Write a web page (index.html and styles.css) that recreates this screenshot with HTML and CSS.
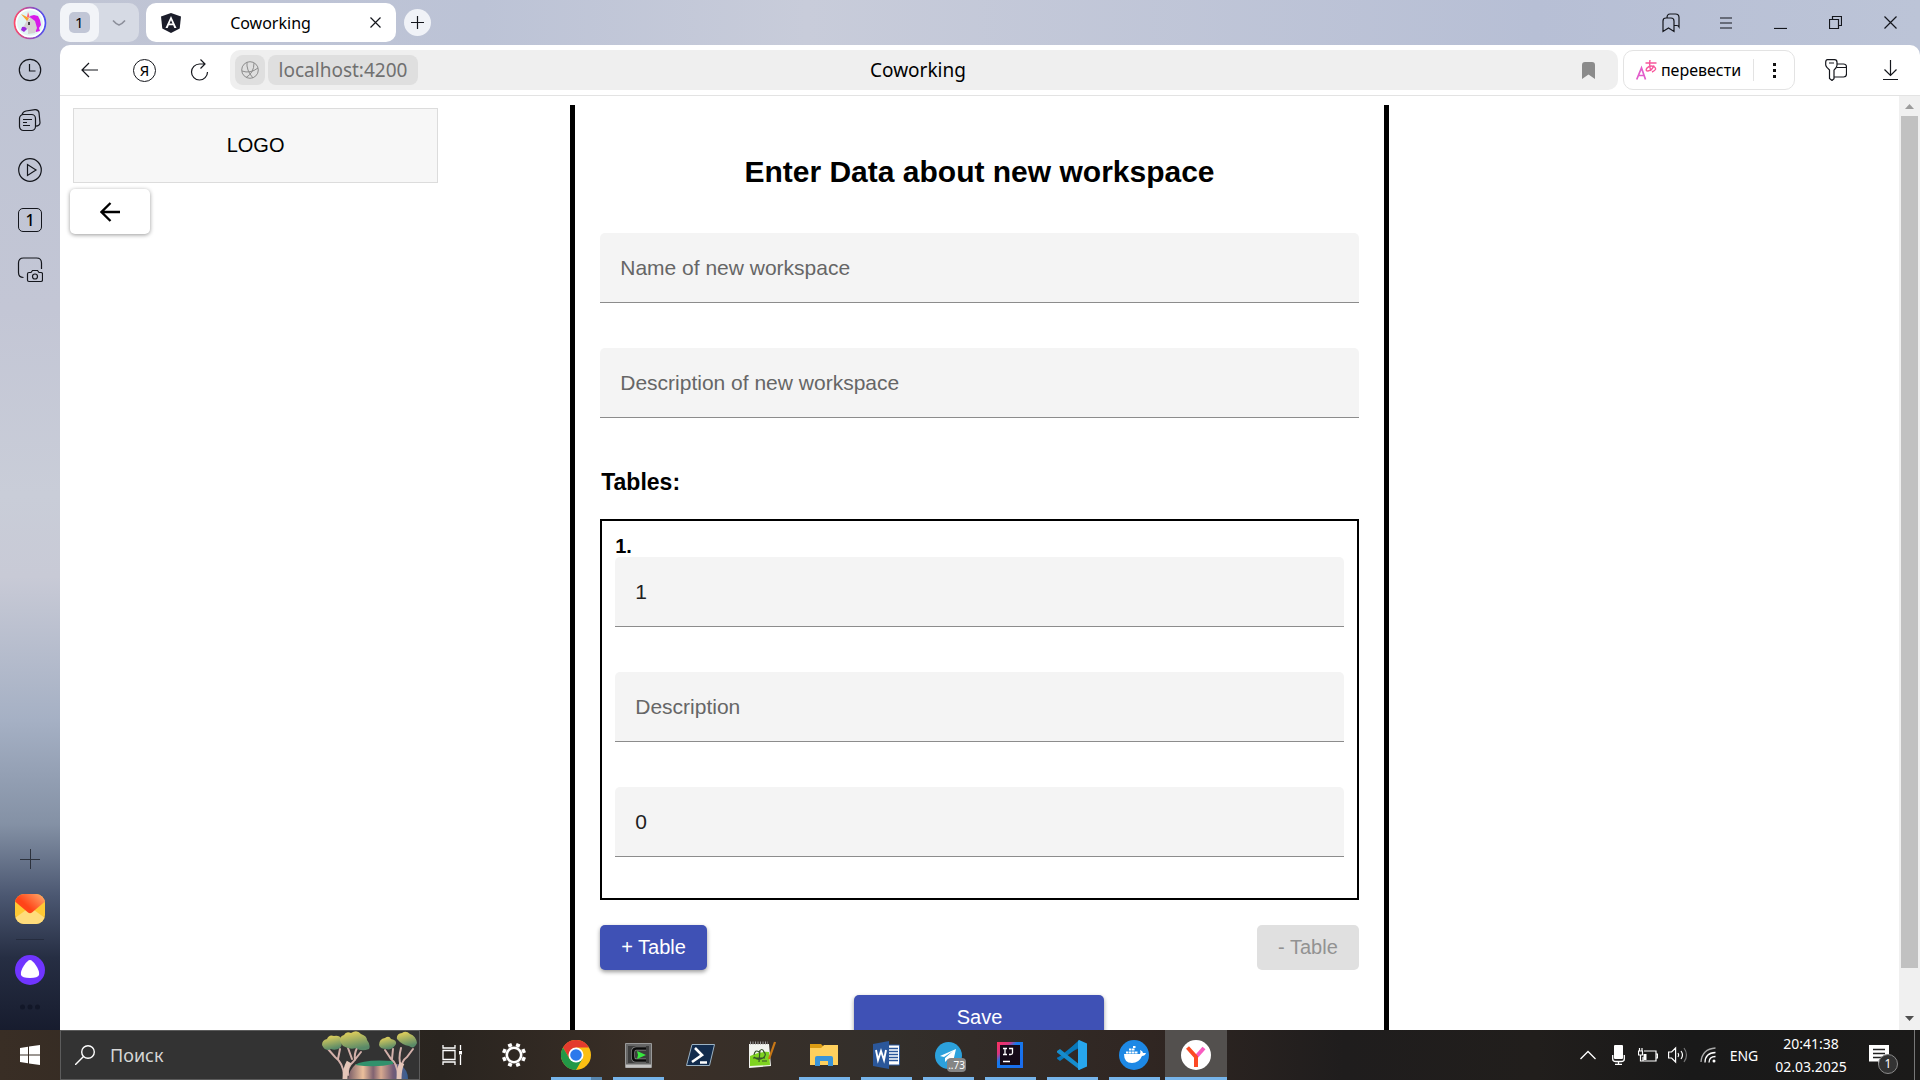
FILE: index.html
```html
<!DOCTYPE html>
<html lang="en">
<head>
<meta charset="utf-8">
<meta name="viewport" content="width=device-width, initial-scale=1">
<title>Coworking</title>
<link rel="stylesheet" href="styles.css">
</head>
<body>
<div class="desktop">
  <div class="browser">
    <nav class="sidebar" aria-label="Browser sidebar">
      <div class="side-group">
        <button class="side-btn avatar-btn" aria-label="Profile">
          <svg width="34" height="34" viewBox="0 0 34 34">
            <defs><linearGradient id="ring" x1="0" x2="1"><stop offset="0" stop-color="#ff4a6b"/><stop offset="1" stop-color="#4a50f5"/></linearGradient></defs>
            <circle cx="17" cy="17" r="15.4" fill="#e2f5f4" stroke="url(#ring)" stroke-width="1.8"/>
            <circle cx="17" cy="17" r="13.6" fill="none" stroke="#fff" stroke-width="1.5"/>
            <path d="M17 10l4-1 4 1 2 4 1 5-2 3 1 3-4 1-4-6z" fill="#d81bea"/>
            <path d="M10 22l4-8 4-2 4 3 2 7-2 5-7 1 0-5-4 1z" fill="#d5d0d2"/>
            <path d="M8 8l8 4-2 3z" fill="#f7a12c"/>
            <path d="M15 6l2 6-3-1z" fill="#ff5a7a"/>
            <path d="M9 21q3-1 5 2l-3 3-3-2z" fill="#9b2be0"/>
            <path d="M16 16v3" stroke="#222" stroke-width="1.600"/>
          </svg>
        </button>
        <button class="side-btn" aria-label="History">
          <svg class="line" width="24" height="24" viewBox="0 0 24 24"><circle cx="12" cy="12" r="10.700"/><path d="M11.500 6v7h6"/></svg>
        </button>
        <button class="side-btn" aria-label="Collections">
          <svg class="line" width="24" height="24" viewBox="0 0 24 24"><rect x="1.500" y="6.500" width="16" height="16" rx="4"/><path d="M4 6.500q1-3 4-3.500l9-1.300q3.500-.2 4 3l1 10q0 3-4.500 3.500M5 11.500h9M5 14.500h4M5 17.500h7"/></svg>
        </button>
        <button class="side-btn" aria-label="Video">
          <svg class="line" width="24" height="24" viewBox="0 0 24 24"><circle cx="12" cy="12" r="11.300"/><path d="M9.500 6.500v11l8.500-5.500z"/></svg>
        </button>
        <button class="side-btn" aria-label="Open tabs"><span class="tab-count">1</span></button>
        <button class="side-btn" aria-label="Screenshot">
          <svg class="line" width="26" height="26" viewBox="0 0 26 26"><path d="M6.500 20.500q-5 0-5-5V6q0-5 5-5h13q5 0 5 5v6"/><path d="M12 15.500h2l1.500-2h5l1.500 2h2q1.500 0 1.500 1.500v6q0 1.500-1.500 1.500h-12q-1.500 0-1.500-1.500v-6q0-1.500 1.500-1.500z"/><circle cx="18" cy="19.500" r="2.500"/></svg>
        </button>
      </div>
      <div class="side-group side-bottom">
        <button class="side-btn" aria-label="Add">
          <svg width="20" height="20" viewBox="0 0 20 20" stroke="#2c313c" fill="none"><path d="M10.500 0v20M0 10.500h20"/></svg>
        </button>
        <button class="side-btn" aria-label="Mail">
          <svg width="30" height="30" viewBox="0 0 30 30">
            <defs><linearGradient id="flap" x1="0" y1=".7" x2="1" y2="0"><stop offset=".3" stop-color="#ff4418"/><stop offset="1" stop-color="#ffb070"/></linearGradient><clipPath id="mailclip"><rect width="30" height="30" rx="9"/></clipPath></defs>
            <g clip-path="url(#mailclip)"><path d="M0 0h30v30H0z" fill="#ffc935"/><path d="M0 24l11-8h8l11 8v6H0z" fill="#ffdc7c"/><path d="M0 0h30v7.500L17 18.500q-2 1.400-4 0L0 7.500z" fill="url(#flap)"/></g>
          </svg>
        </button>
        <span class="side-rule"></span>
        <button class="side-btn" aria-label="Alice">
          <svg width="30" height="30" viewBox="0 0 30 30"><circle cx="15" cy="15" r="15" fill="#7035ff"/><path d="M15 5q2.300 0 6 5.500t3 9.500q-1 3-9 3t-9-3q-.7-4 3-9.500T15 5z" fill="#fff"/></svg>
        </button>
        <button class="side-more" aria-label="More"><svg width="20" height="6" viewBox="0 0 20 6" fill="#121728"><circle cx="2.500" cy="3" r="2.500"/><circle cx="10" cy="3" r="2.500"/><circle cx="17.500" cy="3" r="2.500"/></svg></button>
      </div>
    </nav>

    <div class="window">
      <header class="tabstrip">
        <div class="tab-group">
          <button class="group-btn" aria-label="Tab group"><span class="group-badge">1</span></button>
          <button class="group-more" aria-label="Show groups"><svg width="14" height="8" viewBox="0 0 14 8" fill="none" stroke="#8c8f9a" stroke-width="1.600"><path d="M1 1.500q3 3.500 6 4.500 3-1 6-4.500"/></svg></button>
        </div>
        <div class="tab">
          <svg width="20" height="20" viewBox="0 0 20 20"><path d="M10 0l10 3.500-1.300 12L10 20l-8.700-4.500L0 3.500z" fill="#1b1d2a"/><path d="M10 3L4.500 15h2.200l1.100-2.800h4.400l1.100 2.800h2.200zm0 4.300l1.500 3.200h-3z" fill="#fff"/></svg>
          <span class="tab-title">Coworking</span>
          <button class="plain" aria-label="Close tab"><svg class="line" width="11" height="11" viewBox="0 0 11 11"><path d="M.5.5l10 10M10.500.5l-10 10"/></svg></button>
        </div>
        <button class="new-tab" aria-label="New tab"><svg class="line" width="13" height="13" viewBox="0 0 13 13"><path d="M6.500 0v13M0 6.500h13"/></svg></button>
        <div class="window-controls">
          <button class="tool-btn" aria-label="Bookmarks"><svg class="line" width="18" height="20" viewBox="0 0 18 20"><path d="M1 8q0-3 3-3h5q3 0 3 3v10.500l-5.500-3.500L1 18.500zM5 5q0-4 3-4h5.500q3.500 0 3.500 3.500v9.500q-1-1.500-2-1.500h-3"/></svg></button>
          <button class="tool-btn" aria-label="Menu"><svg class="line" width="12" height="12" viewBox="0 0 12 12"><path d="M0 1h12M0 6h12M0 11h12"/></svg></button>
          <button class="tool-btn" aria-label="Minimize"><svg class="line" width="13" height="13" viewBox="0 0 13 13"><path d="M0 12.500h13"/></svg></button>
          <button class="tool-btn" aria-label="Restore"><svg class="line" width="13" height="13" viewBox="0 0 13 13"><path d="M.5 3.500h9v9h-9zM3.500 3.500v-3h9v9h-3"/></svg></button>
          <button class="tool-btn" aria-label="Close"><svg class="line" width="13" height="13" viewBox="0 0 13 13"><path d="M.5.5l12 12M12.500.5l-12 12"/></svg></button>
        </div>
      </header>

      <div class="toolbar">
        <div class="nav-buttons">
          <button class="tool-btn" aria-label="Back"><svg class="line" width="18" height="16" viewBox="0 0 18 16"><path d="M17 8H1M8 1L1 8l7 7"/></svg></button>
          <button class="tool-btn" aria-label="Yandex"><span class="ya">Я</span></button>
          <button class="tool-btn" aria-label="Reload"><svg class="line" width="19" height="22" viewBox="0 0 19 22"><path d="M14.500 5h-5a8 8 0 1 0 8 8M10.500.5L15 5l-4.500 4.500"/></svg></button>
        </div>
        <div class="omnibox">
          <button class="chip site-icon" aria-label="Site info"><svg width="18" height="18" viewBox="0 0 18 18" fill="none" stroke="#8d8d8d"><circle cx="9" cy="9" r="8.300"/><path d="M6 1Q5 9 12 17M1 10q8 3 16-3M13 2Q13 12 5 16.500"/></svg></button>
          <button class="chip url">localhost:4200</button>
          <span class="page-title">Coworking</span>
          <button class="plain" aria-label="Add bookmark"><svg width="13" height="17" viewBox="0 0 13 17"><path d="M0 3q0-3 3-3h7q3 0 3 3v14l-6.500-4.500L0 17z" fill="#8b8b8b"/></svg></button>
        </div>
        <div class="translate">
          <button class="translate-btn">
            <svg width="21" height="20" viewBox="0 0 21 20" fill="none" stroke-width="1.700"><path d="M.7 19.500L5.500 8l4 11.500M2.500 15.500h6" stroke="#e25ccb"/><path d="M9.500 3h11M14 0q-1 6 1 11M18 5.500q-2 5-6 5.500-3 0-1-3 3-3 7-1.500 4 3-2 5.500" stroke="#f8569c" stroke-width="1.400"/></svg>
            <span>перевести</span>
          </button>
          <button class="translate-more" aria-label="Translation options"><svg width="3" height="15" viewBox="0 0 3 15" fill="#111"><path d="M0 0h3v3H0zM0 6h3v3H0zM0 12h3v3H0z"/></svg></button>
        </div>
        <div class="tool-end">
          <button class="tool-btn" aria-label="Passwords"><svg class="line" width="22" height="22" viewBox="0 0 22 22"><path d="M2.500.7h7q2.500 0 2.500 2.500v3q0 2-3 5v8.500L7 21.500l-2.500-2V11Q1 8 .7 6V3.200Q.7.7 2.500.7zM4 4h5M12 5h6.500q3 0 3 3v7q0 3-3 3H9M12 8.500h9.500"/></svg></button>
          <button class="tool-btn" aria-label="Downloads"><svg class="line" width="15" height="20" viewBox="0 0 15 20"><path d="M7.500 0v15.500M1.500 9.500l6 6 6-6M0 19.500h15"/></svg></button>
        </div>
      </div>

      <div class="viewport">
        <div class="page">
          <aside class="brand">
            <div class="logo">LOGO</div>
            <button class="back" aria-label="Go back"><svg width="20" height="20" viewBox="0 0 20 20" fill="none" stroke="#000" stroke-width="2.300"><path d="M20 10H1.500M10.500 1L1.500 10l9 9"/></svg></button>
          </aside>
          <main class="form-column">
            <form class="form">
              <h1>Enter Data about new workspace</h1>
              <div class="fields">
                <input class="field" type="text" placeholder="Name of new workspace" aria-label="Name of new workspace">
                <input class="field" type="text" placeholder="Description of new workspace" aria-label="Description of new workspace">
              </div>
              <h2>Tables:</h2>
              <fieldset class="table-card" aria-label="Table 1">
                <h3>1.</h3>
                <div class="fields">
                  <input class="field" type="text" value="1" aria-label="Number">
                  <input class="field" type="text" placeholder="Description" aria-label="Description">
                  <input class="field" type="text" value="0" aria-label="Places">
                </div>
              </fieldset>
              <div class="actions">
                <button class="btn" type="button">+ Table</button>
                <button class="btn" type="button" disabled>- Table</button>
              </div>
              <button class="btn save" type="button">Save</button>
            </form>
          </main>
        </div>
        <div class="scrollbar" aria-hidden="true">
          <svg width="9" height="5" viewBox="0 0 9 5"><path d="M0 5l4.500-5L9 5z" fill="#9c9c9c"/></svg>
          <span class="thumb"></span>
          <svg width="9" height="5" viewBox="0 0 9 5"><path d="M0 0l4.500 5L9 0z" fill="#4f4f4f"/></svg>
        </div>
      </div>
    </div>
  </div>

  <footer class="taskbar">
    <button class="start" aria-label="Start"><svg width="20" height="20" viewBox="0 0 20 20" fill="#fff"><path d="M0 3l8-1.200v7.700H0zM9 1.600L20 0v9.500H9zM0 10.500h8v7.700L0 17zM9 10.500h11V20L9 18.400z"/></svg></button>
    <label class="search">
      <svg width="20" height="20" viewBox="0 0 20 20" fill="none" stroke="#fff" stroke-width="1.400"><circle cx="13" cy="7" r="6.300"/><path d="M8.500 11.500L0 20"/></svg>
      <input type="text" placeholder="Поиск" aria-label="Поиск">
      <svg width="97" height="48" viewBox="0 0 97 48">
        <defs>
          <linearGradient id="leaf" x1="0" y1="0" x2=".3" y2="1"><stop offset=".2" stop-color="#d5c95c"/><stop offset="1" stop-color="#5a8a68"/></linearGradient>
          <linearGradient id="rock"><stop offset="0" stop-color="#775b66"/><stop offset=".25" stop-color="#ecc09c"/><stop offset=".42" stop-color="#806271"/><stop offset=".55" stop-color="#d7a98f"/><stop offset=".75" stop-color="#735b76"/><stop offset="1" stop-color="#365f93"/></linearGradient>
        </defs>
        <path d="M27 48q1-9 8-15h44q8 6 8 15z" fill="url(#rock)"/>
        <path d="M34 34q8-6 38-4v3q-16 4-38 1z" fill="#31916c"/>
        <g fill="none" stroke="#d3b0aa" stroke-linecap="round" stroke-width="2">
          <path d="M27 44q-1-8 5-13l8-10M31 28l-4-11M23 44q-1-12-9-18L7 18M17 28l2-10M34 29q-1-6 2-12"/>
          <path d="M77 44q-1-12-7-16l-6-9M80 40q0-10 6-14l6-8M80 35q-3-7 0-18M71 28l1-10"/>
        </g>
        <path d="M24 48q0-10 4-17M78 48q0-10 3-16" stroke="#e4c5b8" stroke-width="5" fill="none"/>
        <g fill="url(#leaf)">
          <path d="M1 14q0-5 5-6 2-5 7-3 6-1 7 3 2 6-1 9-5 3-9 1-6 3-9-4z"/>
          <path d="M20 12q-3-6 3-8 2-4 7-2 6-4 10 1 6 2 6 6 4 5 2 9-8 3-13-1-6 2-13-2z"/>
          <path d="M58 14q0-6 6-7 4-3 6 1 6 1 5 5-4 7-10 5-6 0-7-4z"/>
          <path d="M76 8q-1-5 5-6 4-3 8 1 6 2 7 9-3 7-8 3-7-1-12-7z"/>
        </g>
      </svg>
    </label>
    <div class="apps">
      <button class="app" aria-label="Task view"><svg width="20" height="20" viewBox="0 0 20 20" fill="none" stroke="#fff" stroke-width="1.300"><path d="M1 5.500h12v9H1zM1 0v3h12V0M1 20v-3h12v3M18.500 0v5M18.500 10v10"/><path d="M17 6h3v3.500h-3z" fill="#fff" stroke="none"/></svg></button>
      <button class="app" aria-label="Settings"><svg width="24" height="24" viewBox="0 0 24 24" fill="none" stroke="#fff"><circle cx="12" cy="12" r="7.200" stroke-width="2.600"/><path d="M15.300 4L16.600.8M20 8.700l3.200-1.400M20 15.300l3.200 1.400M15.300 20l1.300 3.200M8.700 20l-1.300 3.200M4 15.300L.8 16.700M4 8.700L.8 7.300M8.700 4L7.400.8" stroke-width="4"/></svg></button>
      <button class="app open multi" aria-label="Chrome"><svg width="30" height="30" viewBox="0 0 30 30"><circle cx="15" cy="15" r="15" fill="#fbbf12"/><path d="M2 7.500A15 15 0 0 1 28 7.500H15L8.500 18.700z" fill="#e33b2e"/><path d="M2 7.500A15 15 0 0 0 15 30l6.500-11.200L8.500 18.800z" fill="#229847"/><circle cx="15" cy="15" r="7.500" fill="#fff"/><circle cx="15" cy="15" r="5.800" fill="#2b79ec"/></svg></button>
      <button class="app open" aria-label="Cmder"><svg width="27" height="25" viewBox="0 0 27 25"><path d="M.5.500h26v24H.5z" fill="#666" stroke="#999"/><path d="M3 3h21v17H3z" fill="#3c3c3c"/><path d="M1 21.500h25v3H1z" fill="#c4c4c4"/><path d="M21 5.500H11q-3 0-3 4v4q0 4 3 4h10" fill="none" stroke="#888" stroke-width="4"/><path d="M21 5.500H11q-3 0-3 4v4q0 4 3 4h10" fill="none" stroke="#0a0a0a" stroke-width="2.600"/><path d="M12 8l9 4-9 4 1-4z" fill="#36e83e"/></svg></button>
      <button class="app" aria-label="PowerShell"><svg width="29" height="22" viewBox="0 0 29 22"><path d="M6 .5h22.500L23.500 21.500H.5z" fill="#122c4d" stroke="#9cb3c4"/><path d="M9 4l7 7-10 7M14 18.500h7" fill="none" stroke="#fff" stroke-width="2.600"/></svg></button>
      <button class="app" aria-label="Notepad++"><svg width="28" height="28" viewBox="0 0 28 28"><path d="M1 3h20l2 22-22 2z" fill="#f2f4ef"/><path d="M2 15q10-5 19-4l1 13-20 1z" fill="#7ed321"/><path d="M2 2h18" stroke="#999" stroke-width="3" stroke-dasharray="1 1.500"/><path d="M6 14q1-6 5-3 3-5 5 0 3 3-1 6-5 3-9-1M5 17h12M12 9l-1 12M14 20h5" fill="none" stroke="#36532b" stroke-width="1.200"/><path d="M27 1l-6 17" stroke="#c97816" stroke-width="2.200"/></svg></button>
      <button class="app open" aria-label="Explorer"><svg width="28" height="24" viewBox="0 0 28 24"><path d="M0 1h11l3 3v5H0z" fill="#dc9c13"/><path d="M0 5h11l3-3h14v20H0z" fill="#ffd05d"/><path d="M5 23V15q0-2 2-2h14q2 0 2 2v8h-5v-5h-8v5z" fill="#3a94d8"/></svg></button>
      <button class="app open" aria-label="Word"><svg width="27" height="28" viewBox="0 0 27 28"><path d="M14 4h12.500v20H14z" fill="#fff" stroke="#2b579a"/><path d="M16 7.500h9M16 10.500h9M16 13.500h9M16 16.500h9M16 19.500h9" stroke="#2b579a" stroke-width="1.300"/><path d="M0 3l16-3v28L0 25z" fill="#2b579a"/><path d="M3 9l2 10 3-9 3 9 2-10" fill="none" stroke="#fff" stroke-width="1.900"/></svg></button>
      <button class="app open" aria-label="Telegram"><svg width="27" height="27" viewBox="0 0 27 27"><circle cx="13.500" cy="13.500" r="13.500" fill="#2ca1dc"/><path d="M5 14l16-7-3 13-5-3-3 3v-4l8-7-9 6z" fill="#fff"/></svg><span class="unread">..73</span></button>
      <button class="app open" aria-label="IntelliJ IDEA"><svg width="26" height="26" viewBox="0 0 26 26"><defs><linearGradient id="idea" x1="0" y1="0" x2="1" y2="1"><stop offset="0" stop-color="#fe315d"/><stop offset=".25" stop-color="#d93580"/><stop offset=".4" stop-color="#1679ec"/><stop offset="1" stop-color="#1b6bee"/></linearGradient></defs><path d="M0 0h26v26H0z" fill="url(#idea)"/><path d="M3 3h20v20H3z" fill="#160a18"/><path d="M6 6.500h4M8 6.500v6M6 12.500h4M12 6.500h3.500V11q0 1.500-2 1.500H12M6 19.500h7" fill="none" stroke="#fff" stroke-width="1.300"/></svg></button>
      <button class="app open" aria-label="Visual Studio Code"><svg width="30" height="30" viewBox="0 0 30 30"><path d="M22 0L3 18.500Q1 20 0 18.500v-1l22-9z" fill="#0065a9"/><path d="M0 18.800L3 21 23 6V0L0 18.800z" fill="#0878ba"/><path d="M0 11l3-2 20 16v5L0 12.500z" fill="#168ccc"/><path d="M22 0l8 3.500v23L22 30q-1 0-1-1V1z" fill="#27a6ed"/></svg></button>
      <button class="app open" aria-label="Docker"><svg width="30" height="30" viewBox="0 0 30 30"><circle cx="15" cy="15" r="15" fill="#1d88e5"/><path d="M5 14h16q1-2 0-4 3 1 3 3h3q-1 3-4 3-3 7-10 7-8 0-8-9z" fill="#fff"/><path d="M7 12.500h12M10 9.500h6M14 7h3" stroke="#fff" stroke-width="2.200" stroke-dasharray="2.500 .5"/></svg></button>
      <button class="app open active" aria-label="Yandex Browser"><svg width="30" height="30" viewBox="0 0 30 30" fill="none" stroke-width="4"><circle cx="15" cy="15" r="15" fill="#fff"/><path d="M15 17l8-9" stroke="#f85bc0"/><path d="M6.500 7.500L15 17v10" stroke="#fc4a25"/></svg></button>
    </div>
    <div class="tray">
      <button class="tray-btn" aria-label="Hidden icons"><svg width="16" height="10" viewBox="0 0 16 10" fill="none" stroke="#fff" stroke-width="1.300"><path d="M.5 9L8 1.500 15.500 9"/></svg></button>
      <button class="tray-btn" aria-label="Microphone"><svg width="13" height="20" viewBox="0 0 13 20" fill="none" stroke="#fff" stroke-width="1.300"><rect x="2" y="0" width="9" height="14" rx="1" fill="#fff" stroke="none"/><path d="M.7 10v4q0 2.500 3 2.500h5.600q3 0 3-2.500v-4M6.500 16v3.300M3 19.300h7"/></svg></button>
      <button class="tray-btn" aria-label="Battery"><svg width="20" height="15" viewBox="0 0 20 15" fill="none" stroke="#fff" stroke-width="1.200"><path d="M6 3h12v10H5V9M18 6h1.500v4H18M.5 3h4v4h-4zM1.500 0v3M4 0v3M2.500 7v6h3"/><path d="M5.500 6h3v6h-3z" fill="#fff" stroke="none"/></svg></button>
      <button class="tray-btn" aria-label="Volume"><svg width="20" height="18" viewBox="0 0 20 18" fill="none" stroke="#fff" stroke-width="1.200"><path d="M.6 6h3l4-4v14l-4-4h-3zM10 7q1.500 2 0 4M13 5q3 4 0 8"/><path d="M16 2q5 7 0 14" stroke="#777"/></svg></button>
      <button class="tray-btn" aria-label="Network"><svg width="16" height="16" viewBox="0 0 16 16" fill="none" stroke="#fff" stroke-width="1.300"><path d="M1 15Q2 2 15.500 1" stroke="#aaa"/><path d="M5 15.500Q5 6 15.500 5.500M9 15.500q0-6 6.500-6"/><circle cx="14" cy="14" r="1.500" fill="#fff" stroke="none"/></svg></button>
      <button class="lang">ENG</button>
      <button class="clock"><span>20:41:38</span><span>02.03.2025</span></button>
      <button class="notice" aria-label="Notifications"><svg width="20" height="20" viewBox="0 0 20 20"><path d="M0 0h20v16.500h-7L9 20v-3.500H0z" fill="#fff"/><path d="M4 4.500h12M4 8.500h12M4 12.500h12" stroke="#222" stroke-width="1.300"/></svg><span class="notice-count">1</span></button>
    </div>
  </footer>
</div>
</body>
</html>
```

FILE: styles.css
```css
* { box-sizing: border-box; }

body {
  margin: 0;
  font-family: "Noto Sans", "Open Sans", sans-serif;
  color: #000;
}

button {
  padding: 0;
  border: 0;
  background: none;
  color: inherit;
  font: inherit;
}

svg { display: block; flex: none; }

.line { fill: none; stroke: #14161c; stroke-width: 1.2; }

.desktop {
  display: flex;
  flex-direction: column;
  height: 100vh;
  overflow: hidden;
}

/* Browser shell */
.browser {
  flex: 1;
  min-height: 0;
  display: flex;
  background: linear-gradient(90deg, #c1c5d4 0, #bcc3d6 25%, #c8ccda 42%, #b7bfd5 80%, #bcc4d7 100%);
}

.sidebar {
  width: 60px;
  flex: none;
  display: flex;
  flex-direction: column;
  justify-content: space-between;
  background: linear-gradient(#bec4d4 0, #c3c6d5 30%, #c9cdd8 48%, #c8cad6 56%, #a5b0c4 70%, #8491a5 80%, #4b5771 87%, #262e43 93%, #171c2e 100%);
}

.side-group { display: flex; flex-direction: column; align-items: center; }
.side-bottom { padding-bottom: 20px; }

.side-btn {
  width: 60px;
  height: 50px;
  display: flex;
  align-items: center;
  justify-content: center;
}

.avatar-btn { height: 45px; }

.tab-count {
  width: 24px;
  height: 24px;
  border: 1px solid #14161c;
  border-radius: 5px;
  font-size: 16px;
  font-weight: 500;
  line-height: 22px;
}

.side-rule { width: 28px; height: 1px; margin: 5px 0; background: #252c3e; }
.side-more { padding-top: 9px; }

.window { flex: 1; min-width: 0; display: flex; flex-direction: column; }

.tabstrip { height: 45px; flex: none; display: flex; align-items: center; padding: 0 2px 0 0; }

.tab-group {
  width: 79px;
  height: 39px;
  display: flex;
  border-radius: 10px;
  background: #d6dae4;
}

.group-btn, .group-more { display: flex; align-items: center; justify-content: center; }
.group-btn { width: 40px; border-radius: 10px; background: #f2f4f8; }
.group-more { width: 42px; }

.group-badge {
  width: 21px;
  height: 21px;
  border-radius: 5px;
  background: #c1c6d6;
  font-size: 15px;
  line-height: 21px;
}

.tab {
  width: 250px;
  height: 39px;
  margin: 0 8px 0 7px;
  padding: 0 15px;
  display: flex;
  align-items: center;
  border-radius: 10px;
  background: #fff;
}

.tab-title { flex: 1; padding-right: 10px; text-align: center; font-size: 16px; }

.new-tab {
  width: 27px;
  height: 27px;
  display: flex;
  align-items: center;
  justify-content: center;
  border-radius: 50%;
  background: #f0f2f7;
}

.window-controls { margin-left: auto; display: flex; }

.tool-btn { width: 55px; height: 40px; display: flex; align-items: center; justify-content: center; }

.toolbar {
  height: 51px;
  flex: none;
  display: flex;
  align-items: center;
  padding: 0 2px;
  border-bottom: 1px solid #e3e3e3;
  border-radius: 10px 10px 0 0;
  background: #fff;
}

.nav-buttons { display: flex; }

.ya {
  width: 23px;
  height: 23px;
  border: 1px solid #14161c;
  border-radius: 50%;
  font-size: 15px;
  line-height: 21px;
}

.omnibox {
  flex: 1;
  height: 40px;
  margin: 0 5px 0 3px;
  padding: 0 23px 0 5px;
  display: flex;
  align-items: center;
  gap: 3px;
  border-radius: 10px;
  background: #efefef;
}

.chip { height: 30px; border-radius: 8px; background: #dfdfdf; color: #707070; }
.site-icon { width: 30px; display: flex; align-items: center; justify-content: center; }
.url { width: 150px; font-size: 19px; line-height: 30px; }
.page-title { flex: 1; padding-right: 164px; text-align: center; font-size: 19px; line-height: 30px; }

.translate {
  width: 172px;
  height: 40px;
  display: flex;
  align-items: center;
  border: 1px solid #e3e3e3;
  border-radius: 10px;
}

.translate-btn {
  flex: 1;
  height: 22px;
  display: flex;
  align-items: center;
  justify-content: center;
  gap: 4px;
  border-right: 1px solid #e3e3e3;
  font-size: 16px;
}

.translate-more { width: 40px; height: 22px; display: flex; align-items: center; justify-content: center; }

.tool-end { display: flex; margin-left: 13px; }

/* Page shown in the browser */
.viewport { flex: 1; min-height: 0; display: flex; background: #fff; }

.page {
  flex: 1;
  min-width: 0;
  height: 100%;
  overflow: hidden;
  padding: 9px 10px 0;
  display: grid;
  grid-template-columns: 1fr 45% 1fr;
  font-family: "Liberation Sans", Arial, sans-serif;
  font-size: 20px;
}

.brand { padding-top: 3px; }

.logo {
  width: 73%;
  height: 75px;
  margin: 0 3px 6px;
  border: 1px solid #dcdcdc;
  background: #f7f7f7;
  line-height: 73px;
  text-align: center;
}

.back {
  width: 80px;
  height: 45px;
  display: flex;
  align-items: center;
  justify-content: center;
  border-radius: 5px;
  background: #fff;
  box-shadow: 0 1px 4px rgba(0, 0, 0, .4);
}

.form-column { height: max-content; border: solid #000; border-width: 0 5px; }

.form { padding: 49px 25px 60px; display: flex; flex-direction: column; }

h1, h2, h3 { margin: 0; }
h1 { margin-bottom: 43px; font-size: 30px; line-height: 36px; text-align: center; }
h2 { margin: 51px 0 24px; padding-left: 1px; font-size: 23px; line-height: 26px; }
h3 { font-size: 20px; line-height: 22px; }

.fields { display: flex; flex-direction: column; gap: 45px; }

.field {
  width: 100%;
  height: 70px;
  padding: 0 20px;
  border: 0;
  border-bottom: 1px solid #8c8c8c;
  border-radius: 5px 5px 0 0;
  background: #f4f4f4;
  color: #212121;
  font-family: inherit;
  font-size: 21px;
}

.field::placeholder { color: #666; opacity: 1; }

.table-card { min-width: 0; margin: 0; padding: 14px 13px 41px; border: 2px solid #000; }

.actions { margin: 25px 0; display: flex; justify-content: space-between; }

.btn {
  height: 45px;
  padding: 0 21px;
  border-radius: 5px;
  background: #3f51b5;
  box-shadow: 0 2px 4px rgba(0, 0, 0, .4);
  color: #fff;
  font-size: 20px;
}

.btn:disabled { background: #e0e0e0; box-shadow: none; color: #929292; }
.save { width: 250px; align-self: center; }

.scrollbar {
  width: 21px;
  padding: 8px 0 9px;
  display: flex;
  flex-direction: column;
  align-items: center;
  background: #f0f0f0;
}

.thumb { width: 17px; flex: 1; margin: 7px 0 48px; background: #c1c1c1; }

/* Taskbar */
.taskbar {
  height: 50px;
  flex: none;
  display: flex;
  background: linear-gradient(90deg, #392e25 0, #29241f 23%, #3a2f27 34%, #332f2b 46%, #302622 60%, #1f1d1d 70%, #211e1c 80%, #191919 88%, #1b1a19 100%);
  color: #fff;
}

.start { width: 60px; display: flex; align-items: center; justify-content: center; }

.search {
  width: 360px;
  display: flex;
  align-items: center;
  padding: 0 1px 0 14px;
  border: 1px solid #5c5c5c;
  background: #333;
}

.search input {
  flex: 1;
  min-width: 0;
  padding: 0 0 0 15px;
  border: 0;
  background: none;
  color: #fff;
  font-family: inherit;
  font-size: 18px;
}

.search input::placeholder { color: #d6d6d6; opacity: 1; }

.apps { display: flex; padding-left: 1px; }

.app {
  width: 62px;
  position: relative;
  display: flex;
  align-items: center;
  justify-content: center;
}

.app.open::after {
  content: "";
  position: absolute;
  right: 5px;
  bottom: 0;
  left: 6px;
  height: 3px;
  background: #76b4ea;
}

.app.multi::after { background: linear-gradient(90deg, #76b4ea 40px, #5785ad 40px); }
.app.active { background: #53504e; }
.app.active::after { right: 0; left: 0; }

.unread {
  position: absolute;
  right: 13px;
  bottom: 8px;
  padding: 0 1px;
  border-radius: 4px;
  background: #858585;
  font-size: 10px;
  line-height: 14px;
}

.tray { margin-left: auto; padding-right: 5px; display: flex; }
.tray-btn { width: 30px; display: flex; align-items: center; justify-content: center; }
.lang { width: 42px; font-size: 14px; }

.clock {
  width: 92px;
  margin-right: 3px;
  display: flex;
  flex-direction: column;
  justify-content: center;
  align-items: center;
  font-size: 14px;
  line-height: 23px;
}

.notice {
  width: 55px;
  position: relative;
  display: flex;
  align-items: center;
  padding-left: 9px;
  border-right: 1px solid #777;
}

.notice-count {
  position: absolute;
  top: 24px;
  left: 18px;
  width: 20px;
  height: 20px;
  border: 1px solid #8a8a8a;
  border-radius: 50%;
  background: #333;
  font-size: 12px;
  line-height: 18px;
}
```
